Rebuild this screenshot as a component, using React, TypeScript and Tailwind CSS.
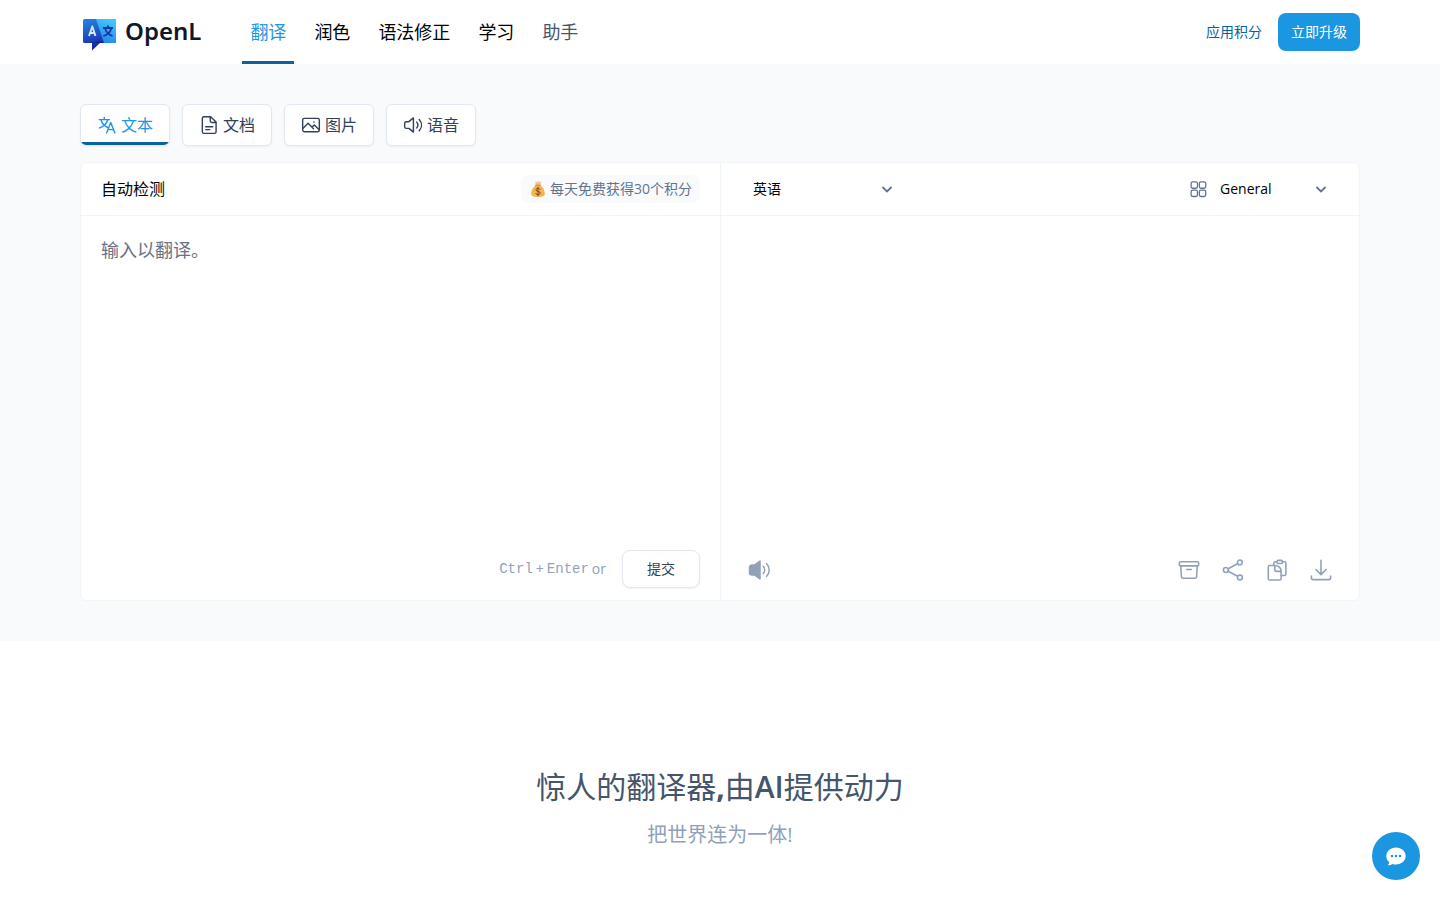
import type { ReactNode } from 'react';

const navItems = [
  { label: '翻译', tone: 'text-[#1d97e0] border-[#0b629f]' },
  { label: '润色', tone: 'text-black border-transparent' },
  { label: '语法修正', tone: 'text-black border-transparent' },
  { label: '学习', tone: 'text-black border-transparent' },
  { label: '助手', tone: 'text-slate-600 border-transparent' },
];

function Icon({ className, width = 1.5, children }: { className: string; width?: number; children: ReactNode }) {
  return (
    <svg
      viewBox="0 0 24 24"
      className={className}
      fill="none"
      stroke="currentColor"
      strokeWidth={width}
      strokeLinecap="round"
      strokeLinejoin="round"
      aria-hidden="true"
    >
      {children}
    </svg>
  );
}

function Logo() {
  return (
    <svg viewBox="0 0 34 34" className="h-[34px] w-[34px] shrink-0" aria-hidden="true">
      <defs>
        <linearGradient id="logoLeft" x1="0" y1="0" x2="0.3" y2="1">
          <stop offset="0" stopColor="#2387e2" />
          <stop offset="0.55" stopColor="#1f4fc4" />
          <stop offset="1" stopColor="#1720a0" />
        </linearGradient>
        <linearGradient id="logoRight" x1="0.7" y1="0" x2="0.4" y2="1">
          <stop offset="0" stopColor="#43c8fb" />
          <stop offset="1" stopColor="#2387ea" />
        </linearGradient>
      </defs>
      <path d="M1.500 1h30q1.500 0 1.500 1.500v21q0 1.500-1.500 1.500H17L9 32.500V25H1.500Q0 25 0 23.500v-21Q0 1 1.500 1z" fill="url(#logoLeft)" />
      <path d="M13 1h18.500q1.500 0 1.500 1.500v21q0 1.500-1.500 1.500H21z" fill="url(#logoRight)" />
      <path d="M9 25h12l-4-2z" fill="#1720a0" />
      <path d="M6 18 9.300 8.500 12.500 18M7.200 15h4.200" fill="none" stroke="#d8e9f6" strokeWidth="1.900" strokeLinejoin="round" />
      <path d="M20 10h10M25 7.500V10M22 10.500c1 3 3.500 6 7.500 7.500M28.300 10.500c-1 3.500-4 6.500-8 7.500" fill="none" stroke="#1739a5" strokeWidth="1.800" />
    </svg>
  );
}

function MoneyBag() {
  return (
    <svg viewBox="0 0 18 18" className="h-[18px] w-[18px]" aria-hidden="true">
      <path d="M6 1.500 8 2l1.200-.7L11 2l1.800-.5-2 4H7.300z" fill="#f3c68c" />
      <path d="M7 5h4c2.800 2 4.800 5.400 4.800 8.500 0 2.600-2 3.500-6.800 3.500s-6.800-.9-6.800-3.500C2.200 10.400 4.200 7 7 5z" fill="#f6b452" />
      <path d="M6.500 5.200h5" stroke="#c08a4a" strokeWidth="1" strokeLinecap="round" />
      <path d="M11 9.300c-.4-.7-1.100-1-2-1-1.200 0-2 .6-2 1.500 0 2.200 4.200 1 4.200 3.200 0 1-.9 1.600-2.200 1.600-1 0-1.900-.4-2.300-1.200M9 7.300v8.300" fill="none" stroke="#6f4a1e" strokeWidth="1" strokeLinecap="round" />
    </svg>
  );
}

function Chevron() {
  return (
    <svg
      viewBox="0 0 12 12"
      className="pointer-events-none absolute top-1/2 right-3 h-3 w-3 -translate-y-1/2 text-slate-500"
      fill="none"
      stroke="currentColor"
      strokeWidth="1.800"
      aria-hidden="true"
    >
      <path d="m1.500 4 4.500 4.500L10.500 4" />
    </svg>
  );
}

const tabs: { label: string; icon: ReactNode }[] = [
  {
    label: '文本',
    icon: <path d="M2.500 5.500h12.500M8.700 2.800v2.700M4.800 6c1.200 4 4.500 7.500 8 9M12.800 6c-1.200 4-4.800 7.800-9.800 9.500M11.500 21.500l5-12.500 5 12.500M13.100 17.500h6.800" />,
  },
  {
    label: '文档',
    icon: <path d="M14 2H6a2 2 0 0 0-2 2v16a2 2 0 0 0 2 2h12.500a2 2 0 0 0 2-2V8.500zM13.500 2.500V7a2 2 0 0 0 2 2h4.500M8 14h8.500M8 17.500h5" />,
  },
  {
    label: '图片',
    icon: (
      <>
        <rect x="2" y="4" width="20" height="16" rx="2" />
        <path d="m2.500 16 6-6 4.500 4.500 2 2M13 14.500l3-2.500 5.500 5.500M15.500 8.300h.1" />
      </>
    ),
  },
  {
    label: '语音',
    icon: <path d="M12.500 3.500v17L7 16H4a2 2 0 0 1-2-2v-4a2 2 0 0 1 2-2h3zM16.500 8.500c1.600 2 1.600 5 0 7M19.500 5.500c3.500 4 3.500 9.500 0 13.500" />,
  },
];

const actions: { label: string; icon: ReactNode }[] = [
  {
    label: '归档',
    icon: <path d="M2.500 3h19a1 1 0 0 1 1 1v2.500a1 1 0 0 1-1 1h-19a1 1 0 0 1-1-1V4a1 1 0 0 1 1-1zM3 7.500l.7 11.700a2 2 0 0 0 2 1.800h12.600a2 2 0 0 0 2-1.800L21 7.500M9.500 11.500h5" />,
  },
  {
    label: '分享',
    icon: (
      <>
        <circle cx="4.200" cy="12" r="2.700" />
        <circle cx="19.500" cy="3.800" r="2.700" />
        <circle cx="19.500" cy="20.200" r="2.700" />
        <path d="m6.700 10.700 10.300-5.500M6.700 13.300 17 18.800" />
      </>
    ),
  },
  {
    label: '复制',
    icon: (
      <>
        <path d="M9.500 7H4a1.500 1.500 0 0 0-1.500 1.500v13A1.500 1.500 0 0 0 4 23h11a1.500 1.500 0 0 0 1.500-1.500V14c0-4.500-2.500-7-7-7zM9.500 7v4.500a2 2 0 0 0 2 2h5" />
        <path d="M8.500 6.500V4.500A1.500 1.500 0 0 1 10 3h2M18 3h2.200A1.500 1.500 0 0 1 21.700 4.500v12A1.500 1.500 0 0 1 20.200 18h-3.500" />
        <rect x="12" y="1.500" width="6" height="3.500" rx="1.200" />
      </>
    ),
  },
  {
    label: '下载',
    icon: <path d="M12 1.500V17M6.500 11.500 12 17l5.500-5.500M1.500 18.500v2a2 2 0 0 0 2 2h17a2 2 0 0 0 2-2v-2" />,
  },
];

export default function App() {
  return (
    <div className="min-h-screen bg-white font-['Open_Sans','Noto_Sans_CJK_SC',sans-serif] text-slate-600">
      <header className="bg-white px-6 lg:px-20">
        <div className="flex h-16 items-center justify-between">
          <div className="flex h-full items-center gap-10">
            <a href="#" className="flex items-start gap-2 pt-1.5 pr-px pl-[3px] text-slate-900">
              <Logo />
              <span className="font-['Noto_Sans',sans-serif] text-2xl leading-[26px] font-semibold">OpenL</span>
            </a>
            <nav className="flex h-full gap-3">
              {navItems.map((item) => (
                <a key={item.label} href="#" className={`flex items-center border-b-[3px] px-2 pt-[3px] text-lg ${item.tone}`}>
                  {item.label}
                </a>
              ))}
            </nav>
          </div>
          <div className="flex items-center gap-4 text-sm">
            <a href="#" className="text-[#0b629f]">应用积分</a>
            <button type="button" className="h-[38px] rounded-lg bg-[#1b96e0] px-[13px] text-white">立即升级</button>
          </div>
        </div>
      </header>

      <main>
        <section className="bg-slate-50 px-6 py-10 lg:px-20">
          <div className="flex gap-3">
            {tabs.map((tab, i) => (
              <button
                key={tab.label}
                type="button"
                className={`relative flex h-[42px] w-[90px] items-center justify-center gap-1 overflow-hidden rounded-md border border-slate-200 bg-white shadow-xs ${
                  i === 0 ? 'text-[#1d97e0]' : 'text-slate-700'
                }`}
              >
                <Icon className="h-5 w-5" width={1.7}>{tab.icon}</Icon>
                <span className="text-base">{tab.label}</span>
                {i === 0 && <span className="absolute inset-x-0 bottom-0 h-[3px] bg-[#0b629f]" />}
              </button>
            ))}
          </div>

          <div className="mt-4 grid grid-cols-2 rounded-md border border-slate-100 bg-white">
            <div className="flex flex-col">
              <div className="flex h-[53px] items-center justify-between border-b border-slate-100 px-5">
                <label htmlFor="source" className="text-base text-black">自动检测</label>
                <span className="flex h-7 items-center gap-[3px] rounded-lg bg-slate-50 px-2 text-sm text-slate-500">
                  <MoneyBag />
                  每天免费获得30个积分
                </span>
              </div>
              <textarea
                id="source"
                placeholder="输入以翻译。"
                className="h-[334px] w-full resize-none p-5 text-lg leading-7 outline-none placeholder:text-gray-500"
              />
              <div className="flex items-center justify-end gap-4 px-5 pb-3">
                <span className="flex items-center gap-[3px] text-sm text-slate-400">
                  <kbd className="font-['Liberation_Mono',monospace]">Ctrl</kbd>
                  <span>+</span>
                  <kbd className="font-['Liberation_Mono',monospace]">Enter</kbd>
                  <span>or</span>
                </span>
                <button type="button" className="h-[38px] w-[78px] rounded-lg border border-slate-200 bg-white text-sm text-slate-700 shadow-xs">
                  提交
                </button>
              </div>
            </div>

            <div className="flex flex-col border-l border-slate-100">
              <div className="flex h-[53px] items-center justify-between border-b border-slate-100 px-5">
                <div className="relative w-[164px]">
                  <select aria-label="目标语言" className="h-9 w-full appearance-none bg-transparent px-3 text-sm text-black outline-none">
                    <option>英语</option>
                  </select>
                  <Chevron />
                </div>
                <div className="flex items-center">
                  <Icon className="h-[18px] w-[18px] text-slate-500" width={1.7}>
                    <rect x="1.500" y="2.500" width="8.500" height="8.500" rx="2.200" />
                    <rect x="12.500" y="2.500" width="8.500" height="8.500" rx="2.200" />
                    <rect x="1.500" y="13.500" width="8.500" height="8.500" rx="2.200" />
                    <rect x="12.500" y="13.500" width="8.500" height="8.500" rx="2.200" />
                  </Icon>
                  <div className="relative w-[131px]">
                    <select aria-label="领域" className="h-9 w-full appearance-none bg-transparent px-3 text-sm text-black outline-none">
                      <option>General</option>
                    </select>
                    <Chevron />
                  </div>
                </div>
              </div>
              <div className="flex-1" aria-live="polite" />
              <div className="flex items-center justify-between px-4 pb-2">
                <button type="button" aria-label="朗读" className="flex h-11 w-11 items-center justify-center text-slate-400">
                  <Icon className="h-6 w-6">
                    <path d="M13 3v18l-5.500-4H5a2.500 2.500 0 0 1-2.500-2.500v-5A2.500 2.500 0 0 1 5 7h2.500z" fill="currentColor" />
                    <path d="M16.300 8.500c1.800 2 1.800 5 0 7M19.500 5.500c3.600 3.800 3.600 9.200 0 13" />
                  </Icon>
                </button>
                <div className="flex">
                  {actions.map((action) => (
                    <button key={action.label} type="button" aria-label={action.label} className="flex h-11 w-11 items-center justify-center text-slate-400">
                      <Icon className="h-[22px] w-[22px]" width={1.7}>{action.icon}</Icon>
                    </button>
                  ))}
                </div>
              </div>
            </div>
          </div>
        </section>

        <section className="px-6 pt-32 pb-12 text-center">
          <h1 className="text-3xl font-normal text-slate-600">
            惊人的翻译器<span className="font-bold">,</span>由<span className="font-semibold">AI</span>提供动力
          </h1>
          <p className="mt-4 text-xl text-slate-400">把世界连为一体!</p>
        </section>
      </main>

      <button
        type="button"
        aria-label="聊天"
        className="fixed right-5 bottom-5 flex h-12 w-12 items-center justify-center rounded-full bg-[#1b96e0] text-white"
      >
        <svg viewBox="0 0 20 20" className="h-5 w-5" aria-hidden="true">
          <path d="M10 1.500c5.500 0 9.700 3.700 9.700 8.500s-4.200 8.500-9.700 8.500c-1.300 0-2.500-.2-3.600-.6-1 .9-2.500 1.300-4.600 1.300.9-.9 1.300-2 1.200-3.200C1.300 14.500.3 12.500.3 10 .3 5.200 4.500 1.500 10 1.500z" fill="currentColor" />
          <g fill="#1b96e0">
            <circle cx="6" cy="10" r="1.250" />
            <circle cx="10" cy="10" r="1.250" />
            <circle cx="14" cy="10" r="1.250" />
          </g>
        </svg>
      </button>
    </div>
  );
}
